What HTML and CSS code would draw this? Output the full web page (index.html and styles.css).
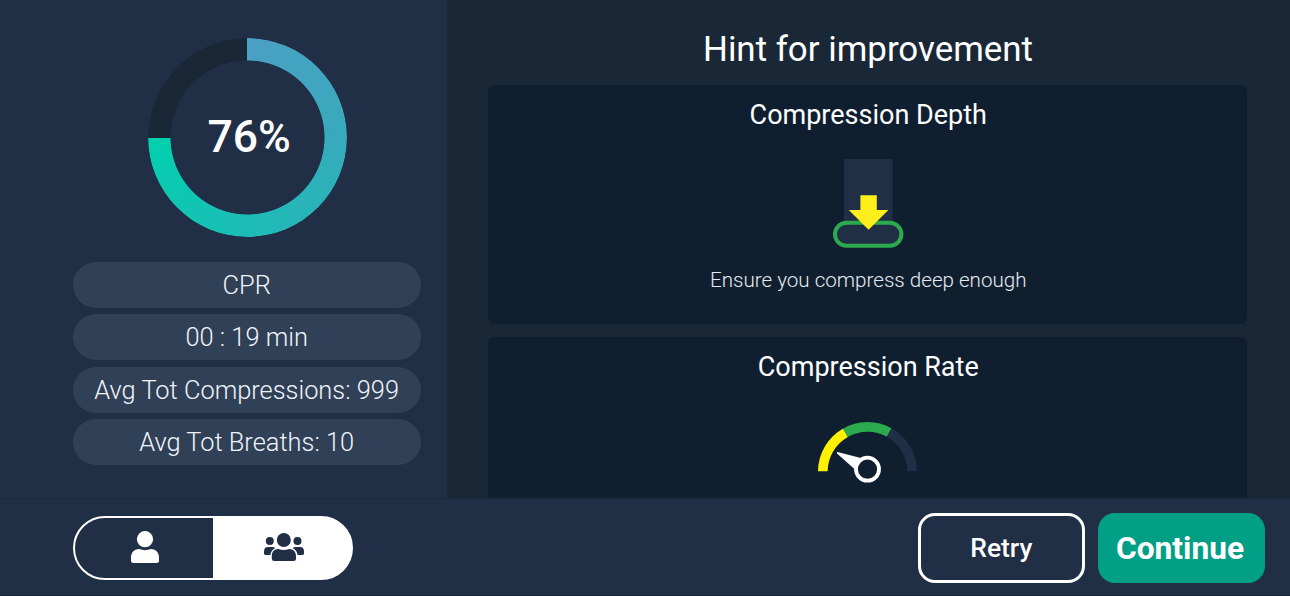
FILE: index.html
```
<!DOCTYPE html>
<html lang="en">
<head>
  <meta charset="UTF-8">
  <meta name="viewport" content="width=device-width, initial-scale=1.0">
  <title>CPR Results</title>
  <link rel="stylesheet" href="styles.css">
</head>
<body>
  <div class="screen">
    <main class="content">
      <section class="summary">
        <div class="score">
          <span class="score-value">76%</span>
        </div>
        <ul class="stats">
          <li>CPR</li>
          <li>00 : 19 min</li>
          <li>Avg Tot Compressions: 999</li>
          <li>Avg Tot Breaths: 10</li>
        </ul>
      </section>

      <section class="hints">
        <h1>Hint for improvement</h1>
        <article class="card">
          <h2>Compression Depth</h2>
          <svg class="depth-icon" width="72" height="90" viewBox="0 0 72 90">
            <rect x="12.1" y="1" width="48.5" height="64" fill="#202f46"/>
            <rect x="3" y="64.7" width="66.4" height="23" rx="11.5" fill="#202f46" stroke="#2bab4e" stroke-width="4"/>
            <path d="M28.4 37.3h16.4v14.8h11.6L36.6 71.8 16.8 52.1h11.6z" fill="#feee1b"/>
          </svg>
          <p>Ensure you compress deep enough</p>
        </article>
        <article class="card">
          <h2>Compression Rate</h2>
          <svg class="rate-icon" width="100" height="64" viewBox="0 0 100 64">
            <g fill="none" stroke-width="9.6">
              <path d="M4.8 50.3A44.4 44.4 0 0 1 27.6 11.8" stroke="#fff200"/>
              <path d="M27.3 11.9A44.4 44.4 0 0 1 71.2 11.5" stroke="#2bab4e"/>
              <path d="M71.2 11.5A44.4 44.4 0 0 1 94 50.3" stroke="#202f46"/>
            </g>
            <path d="M19.5 31L43.8 37.2 37 48.5 19 32.6Q18.4 31 19.5 31z" fill="#fff"/>
            <circle cx="49.5" cy="48.2" r="11.5" fill="#0f1f30" stroke="#fff" stroke-width="3.8"/>
          </svg>
        </article>
      </section>
    </main>

    <footer class="footer">
      <div class="toggle">
        <button class="toggle-item" aria-label="Single">
          <svg width="28" height="32" viewBox="0 0 28 32">
            <circle cx="14" cy="8.2" r="8.1"/>
            <path d="M8 18.1Q14 20.2 20 18.1C25 18.1 28 22 28 26.5V29.5Q28 32 25.5 32H2.5Q0 32 0 29.5V26.5C0 22 3 18.1 8 18.1z"/>
          </svg>
        </button>
        <button class="toggle-item active" aria-label="Team">
          <svg width="40" height="28" viewBox="0 0 40 28">
            <circle cx="19.8" cy="7" r="7"/>
            <circle cx="5.8" cy="8" r="4"/>
            <circle cx="33.5" cy="8" r="4"/>
            <path d="M14.3 16.1Q19.8 18 25.3 16.1C29.5 16.1 32 19 32 23V25.5Q32 28 29.5 28H10.2Q7.8 28 7.8 25.5V23C7.8 19 10 16.1 14.3 16.1z"/>
            <path d="M4.2 14H8.2Q10 14 11.4 15C8.6 16.2 6.8 18.7 6.4 22H1.4Q0 22 0 20.6V18.4Q0 14 4.2 14z"/>
            <path d="M35.8 14H31.8Q30 14 28.6 15C31.4 16.2 33.2 18.7 33.6 22H38.6Q40 22 40 20.6V18.4Q40 14 35.8 14z"/>
          </svg>
        </button>
      </div>
      <div class="actions">
        <button class="btn btn-retry">Retry</button>
        <button class="btn btn-continue">Continue</button>
      </div>
    </footer>
  </div>
</body>
</html>
```
FILE: styles.css
```
* {
  box-sizing: border-box;
}
body {
  margin: 0;
  font-family: Roboto, sans-serif;
  background-color: #1a2737;
  color: #fff;
}
h1, h2, p, ul {
  margin: 0;
  padding: 0;
  font-weight: 400;
}
button {
  font-family: inherit;
  color: inherit;
  padding: 0;
  cursor: pointer;
}
.screen {
  display: flex;
  flex-direction: column;
  height: 596px;
  overflow: hidden;
}
.content {
  display: flex;
  height: 498px;
  overflow: hidden;
}
.summary {
  width: 446.5px;
  flex-shrink: 0;
  padding: 38px 25.5px 0 73.3px;
  background-color: #202f46;
}
.score {
  display: flex;
  align-items: center;
  justify-content: center;
  position: relative;
  width: 199px;
  height: 199px;
  margin: 0 auto 25px;
}
/* progress ring */
.score::before {
  content: "";
  position: absolute;
  inset: 0;
  border-radius: 50%;
  background: conic-gradient(#4b9fc2 0%, #37aabc 25%, #1dbcb6 50%, #02d0ae 75%, #1a2737 75%);
  mask: radial-gradient(circle, transparent 76.6px, #000 77.4px);
}
.score-value {
  font-size: 44.5px;
  font-weight: 500;
  margin: 0 0 2px 4px;
}
.stats {
  display: flex;
  flex-direction: column;
  gap: 6.6px;
  list-style: none;
}
.stats li {
  height: 45.8px;
  line-height: 46px;
  padding-right: 1px;
  border-radius: 23px;
  background-color: #304056;
  color: #f0f4fa;
  font-size: 25.4px;
  font-weight: 300;
  text-align: center;
}
.hints {
  flex: 1;
  padding: 26px 43px 0 41.5px;
  text-align: center;
}
.hints h1 {
  font-size: 34.9px;
  line-height: 46px;
  margin-bottom: 12px;
  padding: 1px 0 0 1px;
}
.card {
  height: 239.3px;
  margin-bottom: 13px;
  padding: 14px 0 0 1.5px;
  border-radius: 6px;
  background-color: #0f1f30;
}
.card h2 {
  font-size: 27px;
  line-height: 32px;
}
.card p {
  font-size: 20.6px;
  font-weight: 300;
  line-height: 24px;
  color: #e6ebf2;
}
.depth-icon {
  display: block;
  margin: 27px auto 20px;
}
.rate-icon {
  display: block;
  margin: 37.5px auto 0;
}
.footer {
  display: flex;
  justify-content: space-between;
  align-items: center;
  height: 98px;
  padding: 1.5px 25.5px 0 73px;
  background-color: #202f46;
  border-top: 1px solid #1b2839;
  border-bottom: 1px solid #14203a;
}
.toggle {
  display: flex;
  width: 280px;
  height: 64px;
  border: 2px solid #fff;
  border-radius: 32px;
  /* fills the seam between the border and the active half */
  background: linear-gradient(to right, transparent 50%, #fff 50%) border-box;
}
.toggle-item {
  display: flex;
  flex: 0 0 50%;
  align-items: center;
  justify-content: center;
  border: none;
  padding: 0 0 2px 2px;
  background-color: transparent;
}
.toggle-item svg {
  fill: currentColor;
}
.toggle-item.active {
  padding-left: 4px;
  color: #202f46;
}
.actions {
  display: flex;
  gap: 12.7px;
}
.btn {
  width: 167px;
  height: 70px;
  border: none;
  border-radius: 17px;
}
.btn-retry {
  border: 3px solid #fff;
  background-color: transparent;
  font-size: 26.4px;
  font-weight: 500;
}
.btn-continue {
  padding: 1px 2px 0 0;
  background-color: #009f86;
  font-size: 31.7px;
  font-weight: 700;
}
```
